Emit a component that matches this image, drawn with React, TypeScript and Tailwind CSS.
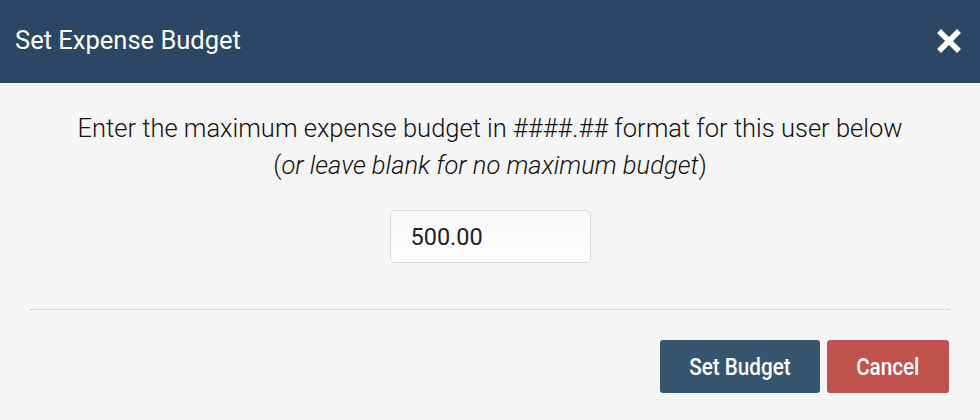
import React from "react";

export default function App() {
  return (
    <div className="w-[980px] h-[420px] bg-[#f5f5f5] flex flex-col" style={{ fontFamily: "Roboto, 'Noto Sans', sans-serif" }}>
      <div className="h-[83px] bg-[#2b4764] flex items-center justify-between pl-[15px] pr-[19px]">
        <h1 className="text-white text-[25.5px] font-normal leading-none pb-[2px]">Set Expense Budget</h1>
        <svg width="24" height="24" viewBox="0 0 24 24" className="mb-[2px]">
          <path d="M4 4 L20 20 M20 4 L4 20" stroke="white" strokeWidth="5.5" strokeLinecap="square" />
        </svg>
      </div>
      <div className="flex flex-col items-center pt-[27px]">
        <p className="text-[#111] text-[25.5px] font-light leading-[37px] text-center">
          Enter the maximum expense budget in ####.## format for this user below
          <br />
          (<i>or leave blank for no maximum budget</i>)
        </p>
        <input
          defaultValue="500.00"
          className="mt-[26px] w-[201px] h-[53px] rounded-[5px] border border-[#d9d9d9] bg-gradient-to-b from-[#f7f7f7] to-white px-[20px] text-[23.5px] text-[#222] outline-none"
        />
      </div>
      <div className="mx-[30px] mt-[46px] border-t border-dotted border-[#bbb]" />
      <div className="flex justify-end gap-[7px] pr-[31px] mt-[30px]">
        <button className="w-[160px] h-[53px] rounded-[3px] bg-[#36566f] text-white text-[24px] font-medium">
          <span className="inline-block scale-x-[0.86]">Set Budget</span>
        </button>
        <button className="w-[122px] h-[53px] rounded-[3px] bg-[#c0524e] text-white text-[24px] font-medium">
          <span className="inline-block scale-x-[0.86]">Cancel</span>
        </button>
      </div>
    </div>
  );
}
